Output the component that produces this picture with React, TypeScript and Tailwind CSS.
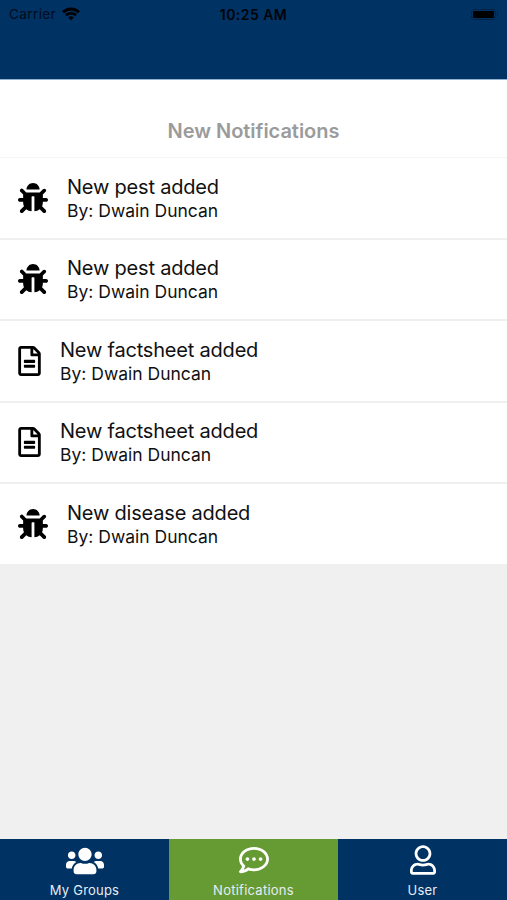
import React from "react";
import { FaBug, FaUsers, FaRegCommentDots, FaRegUser, FaRegFileAlt } from "react-icons/fa";

type Item = { kind: "bug" | "file"; title: string; author: string };

const items: Item[] = [
  { kind: "bug", title: "New pest added", author: "Dwain Duncan" },
  { kind: "bug", title: "New pest added", author: "Dwain Duncan" },
  { kind: "file", title: "New factsheet added", author: "Dwain Duncan" },
  { kind: "file", title: "New factsheet added", author: "Dwain Duncan" },
  { kind: "bug", title: "New disease added", author: "Dwain Duncan" },
];

function WifiIcon() {
  return (
    <svg viewBox="0 0 18 14" className="mb-px ml-[6px] h-[14px] w-[18px]" fill="none" stroke="#000" strokeWidth="2.9">
      <path d="M1.1 5.2a11.2 11.2 0 0 1 15.8 0" />
      <path d="M4 8.2a7 7 0 0 1 10 0" />
      <path d="M9 13.3 6.3 10.5a3.8 3.8 0 0 1 5.4 0Z" fill="#000" stroke="none" />
    </svg>
  );
}

function StatusBar() {
  return (
    <div className="grid h-[27px] grid-cols-3 items-center px-[9px] leading-[27px] text-black">
      <div className="flex items-center text-[13.5px] text-[#000c1b]">
        <span className="pt-px tracking-[0.4px]">Carrier</span>
        <WifiIcon />
      </div>
      <div className="text-center text-[14px] font-semibold tracking-[0.45px] text-[#000408]">10:25 AM</div>
      <div className="flex items-center justify-end">
        <div className="h-[11px] w-[25px] rounded-[3px] border border-[#002347] p-px">
          <div className="h-full rounded-[1px] bg-black" />
        </div>
        <div className="ml-px h-1 w-px rounded-r bg-[#002347]" />
      </div>
    </div>
  );
}

function Row({ item }: { item: Item }) {
  return (
    <li className="flex h-[81.5px] items-center border-b-2 border-[#efefef] bg-white pl-[18px] text-[#111]">
      {item.kind === "bug" ? (
        <FaBug className="mr-[19px] h-[30px] w-[30px] text-black" />
      ) : (
        <FaRegFileAlt className="mr-[19px] h-[30px] w-[23px] text-black" />
      )}
      <div className="pt-px">
        <div className="text-[20px] leading-[24px] tracking-[-0.2px]">{item.title}</div>
        <div className="text-[17.5px] leading-[23px]">By: {item.author}</div>
      </div>
    </li>
  );
}

export default function App() {
  return (
    <div className="flex h-[900px] w-[507px] flex-col overflow-hidden bg-[#f0f0f0] font-['Inter','Liberation_Sans',sans-serif]">
      <header className="h-[79.5px] border-b border-[#8fb0ce] bg-[#003263]">
        <StatusBar />
      </header>
      <h1 className="flex h-[78.5px] items-center justify-center border-b border-[#f5f5f5] bg-white pt-[26px] text-[20px] font-semibold tracking-[-0.03px] text-[#9b9b9b]">
        New Notifications
      </h1>
      <ul>
        {items.map((item, i) => (
          <Row key={i} item={item} />
        ))}
      </ul>
      <nav className="mt-auto grid h-[61px] grid-cols-3 bg-[#003263] text-[13px] text-[#e6edf3]">
        <div className="flex flex-col items-center pt-[4px]">
          <FaUsers className="mb-px h-[36px] w-[38px] text-white" />
          <span className="leading-[20px] tracking-[0.2px]">My Groups</span>
        </div>
        <div className="flex flex-col items-center bg-[#669a33] pt-[6px]">
          <FaRegCommentDots className="mb-[5px] h-[30px] w-[30px] text-white" />
          <span className="leading-[20px] tracking-[0.25px]">Notifications</span>
        </div>
        <div className="flex flex-col items-center pt-[6px]">
          <FaRegUser className="mb-[5px] h-[30px] w-[26px] text-white" />
          <span className="leading-[20px] tracking-[0.2px]">User</span>
        </div>
      </nav>
    </div>
  );
}
